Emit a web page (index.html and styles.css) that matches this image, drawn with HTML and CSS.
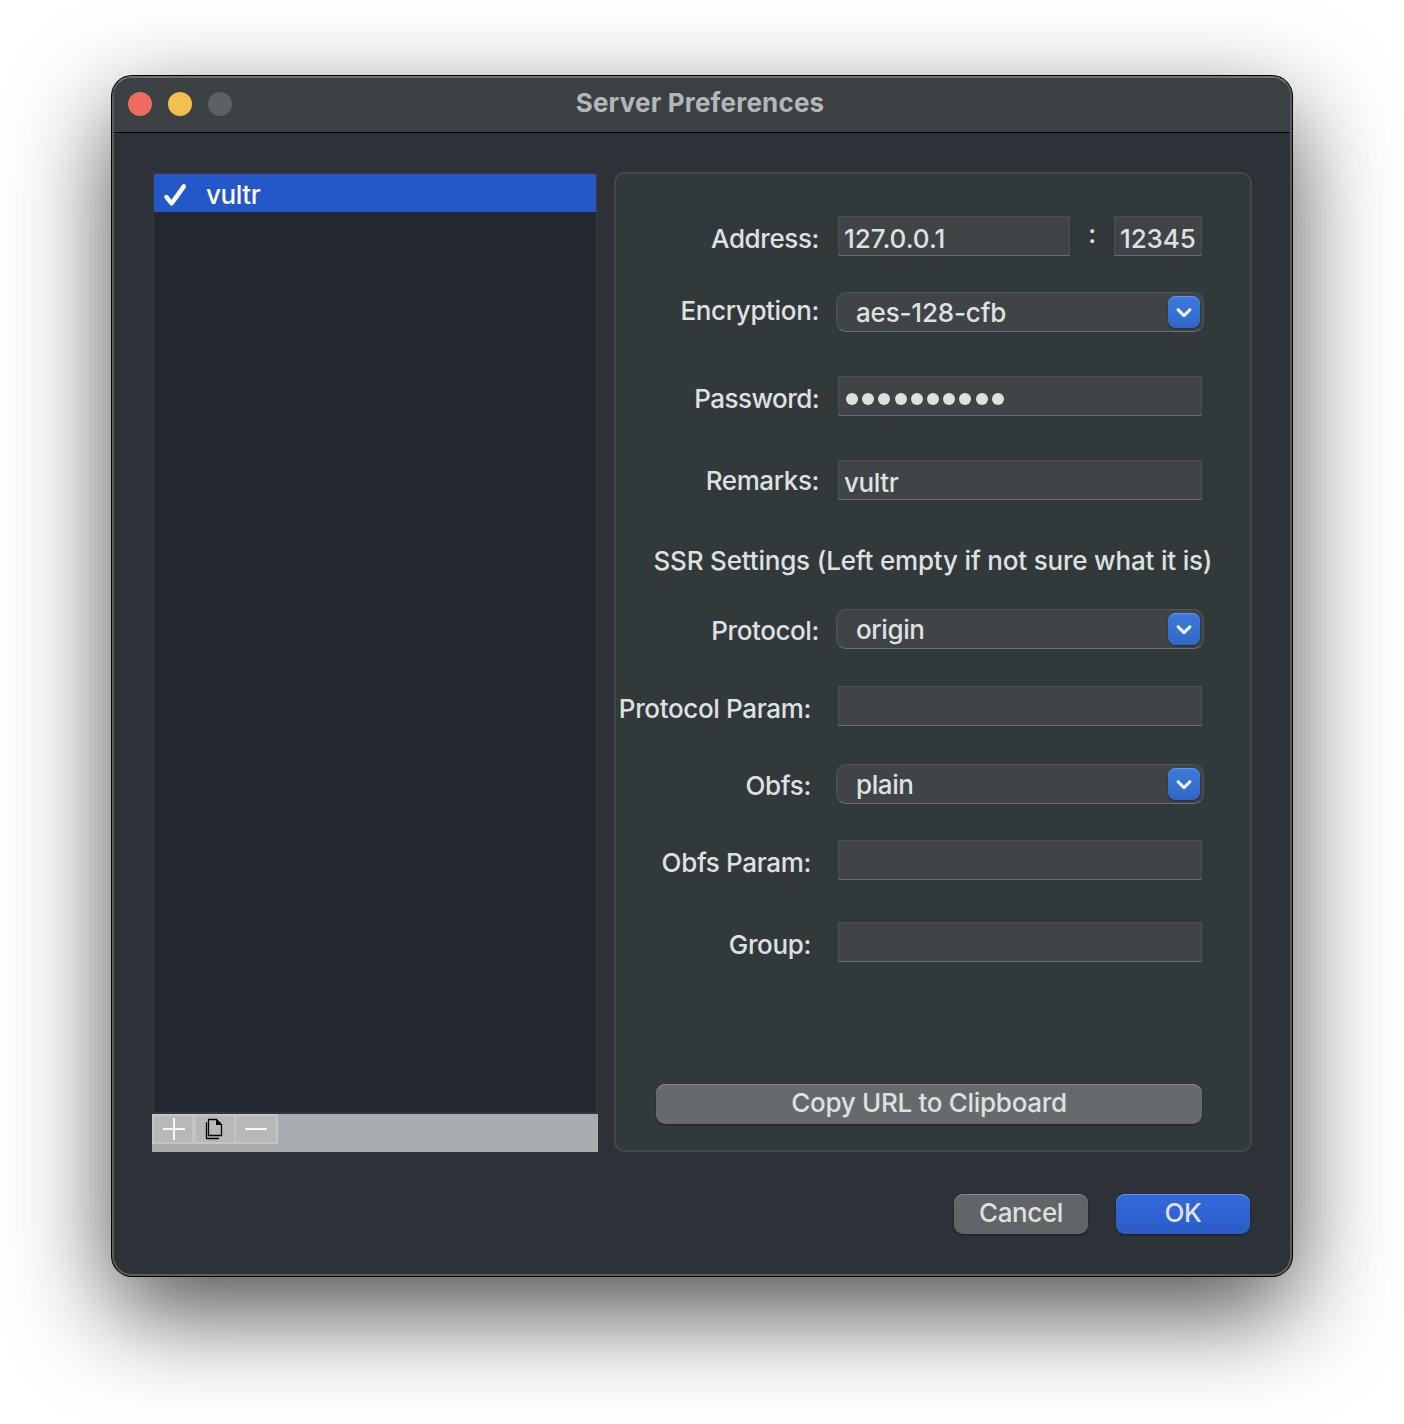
FILE: index.html
```html
<!DOCTYPE html>
<html lang="en">
<head>
<meta charset="utf-8">
<title>Server Preferences</title>
<link rel="stylesheet" href="styles.css">
</head>
<body>
<main class="window">
  <header class="titlebar">
    <div class="lights"><i class="light close"></i><i class="light minimize"></i><i class="light zoom"></i></div>
    <h1 class="title">Server Preferences</h1>
  </header>
  <div class="content">
    <section class="servers">
      <div class="server-list">
        <div class="server selected">
          <svg class="check" width="24" height="24" viewBox="0 0 24 24"><path d="M3.4 14 8.6 20.4 20.9 3.4"/></svg>
          <span class="t-list">vultr</span>
        </div>
      </div>
      <div class="toolbar">
        <button class="tool add" aria-label="Add"><svg width="22" height="22" viewBox="0 0 22 22"><path d="M11 0v22M0 11h22" stroke="#f8f8f8" stroke-width="2"/></svg></button>
        <button class="tool copy" aria-label="Duplicate"><svg width="18" height="22" viewBox="0 0 18 22"><path d="M3.5 1.5H11.5L16.5 6.5V17.5H3.5Z" fill="none" stroke="#000" stroke-width="1.3"/><path d="M11 1.5V7H16.5Z" fill="#000"/><path d="M1.5 4V20.5H14" fill="none" stroke="#000" stroke-width="1.3"/></svg></button>
        <button class="tool remove" aria-label="Remove"><svg width="22" height="22" viewBox="0 0 22 22"><path d="M0 11h22" stroke="#f8f8f8" stroke-width="2"/></svg></button>
      </div>
    </section>
    <section class="panel">
      <div class="row r-address"><label class="label low">Address:</label><div class="field host">127.0.0.1</div><span class="colon">:</span><div class="field port">12345</div></div>
      <div class="row r-encryption"><label class="label high">Encryption:</label><div class="popup"><span class="t-enc">aes-128-cfb</span><span class="arrow"><svg width="16" height="12" viewBox="0 0 16 12"><path d="M2.2 2.8 8 8.6 13.8 2.8"/></svg></span></div></div>
      <div class="row r-password"><label class="label low tight">Password:</label><div class="field dots"><i></i><i></i><i></i><i></i><i></i><i></i><i></i><i></i><i></i><i></i></div></div>
      <div class="row r-remarks"><label class="label">Remarks:</label><div class="field">vultr</div></div>
      <p class="note">SSR Settings (Left empty if not sure what it is)</p>
      <div class="row r-protocol"><label class="label mid">Protocol:</label><div class="popup"><span>origin</span><span class="arrow"><svg width="16" height="12" viewBox="0 0 16 12"><path d="M2.2 2.8 8 8.6 13.8 2.8"/></svg></span></div></div>
      <div class="row r-pparam"><label class="label low inset">Protocol Param:</label><div class="field"></div></div>
      <div class="row r-obfs"><label class="label mid inset">Obfs:</label><div class="popup"><span>plain</span><span class="arrow"><svg width="16" height="12" viewBox="0 0 16 12"><path d="M2.2 2.8 8 8.6 13.8 2.8"/></svg></span></div></div>
      <div class="row r-oparam"><label class="label low inset">Obfs Param:</label><div class="field"></div></div>
      <div class="row r-group"><label class="label low inset">Group:</label><div class="field"></div></div>
      <button class="button copy-url">Copy URL to Clipboard</button>
    </section>
  </div>
  <footer class="actions">
    <button class="button cancel">Cancel</button>
    <button class="button ok">OK</button>
  </footer>
</main>
</body>
</html>
```
FILE: styles.css
```css
* { box-sizing: border-box; }
body {
  margin: 0;
  padding: 76px 112px 0;
  height: 1424px;
  overflow: hidden;
  background: #fff;
  color: #dfe1e1;
  font: 450 26px/40px Inter, "Liberation Sans", sans-serif;
  letter-spacing: -0.4px;
}
button { font: inherit; letter-spacing: inherit; color: inherit; border: 0; padding: 0; }
.window {
  width: 1180px;
  height: 1200px;
  border: 2px solid #585d60;
  border-top-color: #6d7273;
  border-radius: 20px;
  overflow: hidden;
  background: #2d3138;
  box-shadow: 0 0 0 1px #000, 0 36px 100px rgba(0, 0, 0, .7);
}
.titlebar {
  display: grid;
  grid-template-columns: 198px 1fr 202px;
  height: 55px;
  border-bottom: 1px solid #000;
  background: #3b4042;
}
.lights { display: flex; gap: 16px; padding: 14px 0 0 14px; }
.light { width: 24px; height: 24px; border-radius: 50%; }
.close { background: #ed6a5f; }
.minimize { background: #f5bf4f; }
.zoom { background: #5d6163; }
.title { margin: 0; padding-top: 5px; text-align: center; color: #b3b7b9; font-size: 26px; font-weight: 700; line-height: 40px; letter-spacing: 0.18px; white-space: nowrap; }
.content { display: flex; gap: 16px; height: 980px; margin: 39px 38px 0; }
.servers { display: flex; flex-direction: column; width: 446px; }
.server-list { height: 942px; border: 2px solid #333537; background: #242830; }
.server { display: flex; align-items: center; height: 38px; padding-left: 9px; }
.selected { background: #2457c8; color: #fff; }
.check { margin: 4px 19px 0 0; fill: none; stroke: #fff; stroke-width: 4.4; stroke-linecap: round; stroke-linejoin: round; }
.t-list { padding-top: 4px; }
.toolbar { display: flex; height: 38px; background: #a8acae; }
.tool { display: flex; align-items: center; justify-content: center; height: 30px; border: 2px solid #c2c4c5; border-left-width: 0; background: #b7b8b9; }
.add { width: 44px; border-left-width: 2px; border-right-width: 4px; padding-left: 1px; }
.copy { width: 40px; padding-right: 2px; }
.remove { width: 42px; }
.panel { display: flex; flex-direction: column; width: 638px; border: 2px solid #43494b; border-radius: 10px; background: #32393b; }
.row { display: flex; height: 40px; flex-shrink: 0; padding-right: 48px; }
.label { flex: none; width: 204px; height: 40px; padding: 1px 1px 0 0; text-align: right; white-space: nowrap; }
.low { padding-top: 3px; }
.mid { padding-top: 2px; }
.high { margin-top: -2px; letter-spacing: -0.35px; }
.tight { letter-spacing: -0.55px; }
.inset { width: 196px; margin-right: 8px; letter-spacing: -0.35px; }
.field { flex: 1; height: 40px; margin-left: 18px; padding: 1px 5px; line-height: 42px; background: #3f4447; border: 1px solid #4b5052; border-bottom-color: #6c7072; white-space: nowrap; }
.host { flex: none; width: 232px; letter-spacing: 0; }
.colon { width: 44px; text-align: center; line-height: 36px; }
.port { flex: none; width: 88px; margin-left: 0; letter-spacing: -0.1px; }
.dots { display: flex; align-items: center; gap: 4.2px; padding: 5px 0 0 7px; }
.dots i { width: 12px; height: 12px; border-radius: 50%; background: #dfe1e1; }
.popup { display: flex; justify-content: space-between; flex: 1; height: 40px; margin: 0 -2px 0 16px; padding: 0 2px 0 19px; border: 1px solid #505557; border-bottom-color: #6c7072; border-radius: 10px; background: #3f4447; }
.t-enc { letter-spacing: -0.18px; }
.arrow { display: flex; align-items: center; justify-content: center; width: 32px; height: 32px; margin: 3px 1px 0 0; padding-top: 2px; border-radius: 8px; background: linear-gradient(#3d7ade, #3068c6); box-shadow: 0 1px 2px rgba(0, 0, 0, .4), inset 0 1px #6095e4; }
.arrow svg { fill: none; stroke: #e8effb; stroke-width: 3.2; stroke-linecap: round; stroke-linejoin: round; }
.r-address { margin-top: 42px; }
.r-encryption { margin-top: 36px; }
.r-password, .r-remarks { margin-top: 44px; }
.note { margin: 41px 0 0 37.5px; height: 40px; letter-spacing: -0.19px; white-space: nowrap; }
.r-protocol { margin-top: 28px; }
.r-pparam { margin-top: 37px; }
.r-obfs { margin-top: 38px; }
.r-oparam { margin-top: 36px; }
.r-group { margin-top: 42px; }
.button { height: 40px; border-radius: 9px; background: #656a6c; line-height: 37px; padding-bottom: 3px; box-shadow: 0 1px 2px rgba(0, 0, 0, .45), inset 0 1px #85898b; }
.copy-url { width: 546px; margin: 122px 0 0 40px; flex-shrink: 0; letter-spacing: -0.3px; }
.actions { display: flex; justify-content: flex-end; gap: 28px; margin: 42px 40px 0 0; }
.cancel, .ok { width: 134px; }
.cancel { background: #606567; }
.ok { background: linear-gradient(#3469df, #2b5cc7); box-shadow: 0 1px 2px rgba(0, 0, 0, .45), inset 0 1px #6490ea; }
```
